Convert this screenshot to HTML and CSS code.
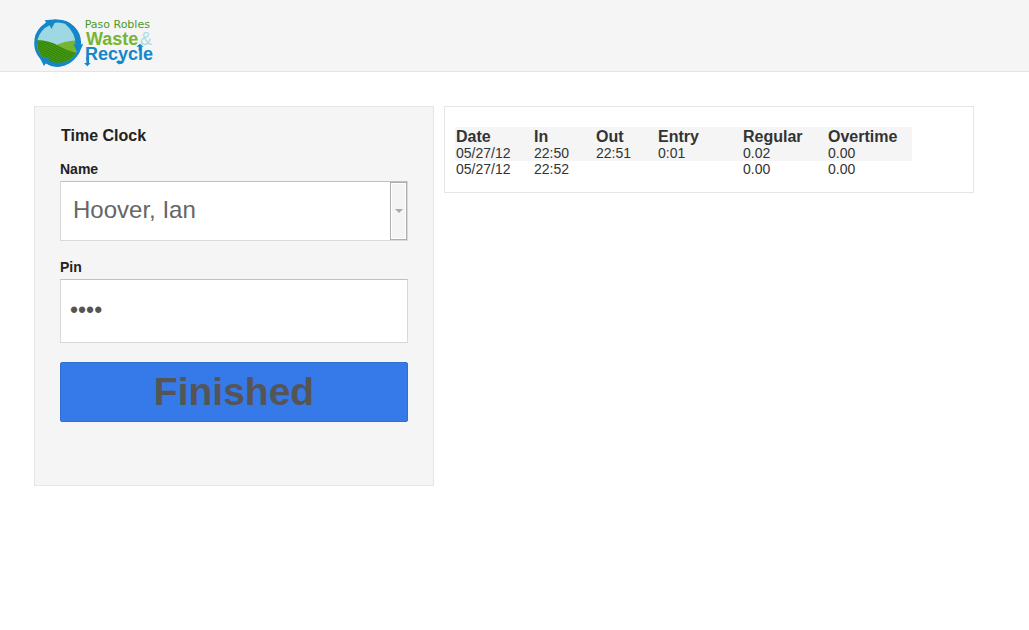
FILE: index.html
```html
<!DOCTYPE html>
<html lang="en">
<head>
<meta charset="utf-8">
<title>Time Clock</title>
<link rel="stylesheet" href="styles.css">
</head>
<body>
<header class="topbar">
  <svg class="logo" viewBox="30 24 390 150" role="img" aria-label="Paso Robles Waste &amp; Recycle">
    <defs>
      <clipPath id="globe"><circle cx="101" cy="99" r="62"/></clipPath>
      <pattern id="crop" width="8" height="6" patternUnits="userSpaceOnUse" patternTransform="rotate(28)">
        <rect width="8" height="6" fill="#4c9a12"/>
        <rect width="8" height="3" fill="#2f850b"/>
      </pattern>
    </defs>
    <circle cx="101" cy="99" r="66" fill="#9dd8e3" stroke="#1487c9" stroke-width="9"/>
    <g clip-path="url(#globe)">
      <path d="M90 108 Q130 90 170 92 V170 H90Z" fill="#76b532"/>
      <path d="M30 90 Q75 90 105 108 Q140 127 170 130 V170 H30Z" fill="url(#crop)"/>
    </g>
    <path d="M62 31 L98 28 L82 57 L77 46 Q50 58 41 88 L32 88 Q36 58 67 39Z" fill="#1487c9"/>
    <path d="M148 101 L154 104 Q157 72 124 42 L128 35 Q166 54 170 104 L178 101 L163 134Z" fill="#1487c9"/>
    <path d="M46 141 L78 142 L71 149 Q88 162 122 157 L124 166 Q90 178 66 160 L60 168Z" fill="#1487c9"/>
    <text class="logo-place" x="182" y="55">Paso Robles</text>
    <text class="logo-waste" x="186" y="104">Waste</text>
    <text class="logo-amp" x="348" y="104">&amp;</text>
    <text class="logo-recycle" x="183" y="151">Recycle</text>
    <g fill="#1487c9">
      <path d="M187 140 H195 V159 H200 L190 169 L180 159 H187Z"/>
      <path d="M344 122 V110 H337 L348 101 L359 110 H352 V122Z"/>
      <path d="M297 152 Q295 160 286 160 V164 L276 156 L286 149 V153Z"/>
    </g>
  </svg>
</header>
<main class="content">
  <form class="clock">
    <h1 class="clock-title">Time Clock</h1>
    <label class="label" for="name">Name</label>
    <div class="picker">
      <select class="field select" id="name"><option>Hoover, Ian</option></select>
      <span class="picker-button"></span>
    </div>
    <label class="label" for="pin">Pin</label>
    <input class="field pin" id="pin" type="password" value="1234">
    <button class="finish" type="button">Finished</button>
  </form>
  <section class="entries">
    <table class="times">
      <colgroup>
        <col class="col-date"><col class="col-time"><col class="col-time">
        <col class="col-hours"><col class="col-hours"><col class="col-hours">
      </colgroup>
      <thead>
        <tr><th>Date</th><th>In</th><th>Out</th><th>Entry</th><th>Regular</th><th>Overtime</th></tr>
      </thead>
      <tbody>
        <tr class="shaded"><td>05/27/12</td><td>22:50</td><td>22:51</td><td>0:01</td><td>0.02</td><td>0.00</td></tr>
        <tr><td>05/27/12</td><td>22:52</td><td></td><td></td><td>0.00</td><td>0.00</td></tr>
      </tbody>
    </table>
  </section>
</main>
</body>
</html>
```

FILE: styles.css
```css
* { box-sizing: border-box; }
body {
  margin: 0;
  background: #fff;
  color: #333;
  font-family: "Liberation Sans", Arial, sans-serif;
  font-size: 14px;
}
.topbar {
  padding: 18px 34px 3px;
  background: #f5f5f5;
  border-bottom: 1px solid #e5e5e5;
}
.logo { display: block; width: 130px; height: 50px; }
.logo-place { font-family: "DejaVu Sans", Verdana, sans-serif; font-size: 33px; fill: #4c9a2a; }
.logo-waste { font-size: 54px; font-weight: bold; fill: #76b532; }
.logo-amp { font-size: 54px; fill: #a9dce6; }
.logo-recycle { font-size: 54px; font-weight: bold; fill: #1487c9; }

.content {
  display: flex;
  align-items: flex-start;
  gap: 10px;
  padding: 34px;
}
.clock {
  flex: 0 1 400px;
  padding: 20px 25px 63px;
  background: #f5f5f5;
  border: 1px solid #e5e5e5;
}
.clock-title {
  margin: 0 0 16px 1px;
  color: #222;
  font-size: 16px;
  line-height: 18px;
}
.label {
  display: block;
  margin-bottom: 4px;
  color: #222;
  font-weight: bold;
  line-height: 16px;
}
.field {
  display: block;
  width: 100%;
  margin: 0;
  background: #fff;
  border: 1px solid #d9d9d9;
  border-top-color: #c0c0c0;
  border-radius: 0;
  font-family: inherit;
  font-size: 24px;
}
.picker { position: relative; margin-bottom: 18px; }
.select {
  height: 60px;
  padding: 0 24px 4px 12px;
  color: #666;
  appearance: none;
}
.picker-button {
  position: absolute;
  top: 1px;
  right: 1px;
  bottom: 1px;
  display: flex;
  align-items: center;
  justify-content: center;
  width: 17px;
  background: #f4f4f4;
  border: 1px solid #abb0af;
  box-shadow: inset 0 0 0 1px #fff;
  pointer-events: none;
}
.picker-button::before {
  content: "";
  border: 4px solid transparent;
  border-top-color: #aaa;
  border-bottom: 0;
}
.pin {
  height: 64px;
  margin-bottom: 19px;
  padding: 0 9px 2px;
  color: #555;
  font-size: 23px;
}
.finish {
  display: block;
  width: 100%;
  height: 60px;
  padding: 0;
  background: #357ae8;
  border: 1px solid #2f6fd2;
  border-radius: 2px;
  color: #555;
  font-family: inherit;
  font-size: 39px;
  font-weight: bold;
}
.entries {
  flex: 0 1 530px;
  padding: 20px 10px 15px;
  border: 1px solid #e5e5e5;
}
.times {
  table-layout: fixed;
  width: 457px;
  border-collapse: collapse;
}
.times th, .times td {
  height: 16px;
  padding: 0 1px;
  line-height: 16px;
  text-align: left;
}
.times th { height: 18px; padding-top: 2px; font-size: 16px; }
.times thead, .shaded { background: #f5f5f5; }
.col-date { width: 78px; }
.col-time { width: 62px; }
.col-hours { width: 85px; }
```
